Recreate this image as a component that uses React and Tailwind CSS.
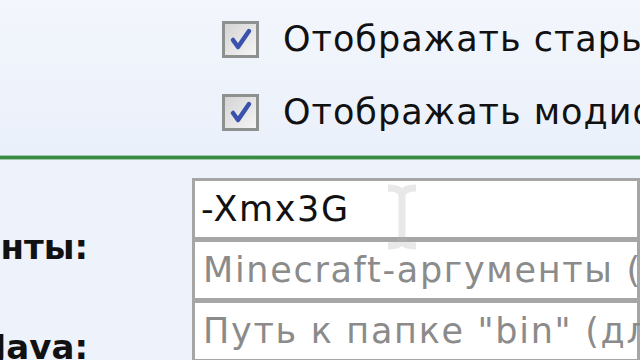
import { useState } from 'react'

const font = { fontFamily: '"DejaVu Sans", Verdana, sans-serif' }

const CheckRow = ({ label }) => (
  <div className="flex items-center gap-[24px] h-[40px]">
    <div className="w-[37px] h-[37px] shrink-0 border-[3px] border-[#8f9090] bg-gradient-to-br from-[#d4d4d4] to-[#f5f5f5] flex items-center justify-center">
      <svg width="26" height="26" viewBox="0 0 26 26">
        <path d="M5 14 L10 21 L21 5" fill="none" stroke="#3a52ae" strokeWidth="4.5" strokeLinecap="round" strokeLinejoin="round" />
      </svg>
    </div>
    <span className="text-[35px] text-[#111] whitespace-nowrap leading-none tracking-[1px]">{label}</span>
  </div>
)

const Field = ({ value, placeholder }) => (
  <div className="h-[62px] border-[3px] border-[#a6a6a6] bg-white flex items-center pl-[6px] -mt-[1px] first:mt-0">
    {value ? (
      <span className="text-[35px] text-[#111] whitespace-nowrap tracking-[1.6px]">{value}</span>
    ) : (
      <span className="text-[35px] text-[#8b8b8b] whitespace-nowrap tracking-[1.7px] pl-[2px]">{placeholder}</span>
    )}
  </div>
)

export default function App() {
  const [showOld] = useState(true)
  return (
    <div className="w-[640px] h-[360px] overflow-hidden bg-[#edf2fb]" style={font}>
      {/* Checkboxes */}
      <div className="h-[155px] pl-[222px] pt-[19px] flex flex-col gap-[33px] bg-gradient-to-b from-[#f3f6fc] to-[#eaf0fa]">
        <CheckRow label="Отображать старые версии" checked={showOld} />
        <CheckRow label="Отображать модифицированные версии" />
      </div>

      {/* Divider */}
      <div className="h-[5px] bg-[#3a8a45] border-y border-[#9fcca8]" />

      {/* Arguments */}
      <div className="relative flex pt-[18px]">
        <div className="w-[192px] shrink-0 flex flex-col items-end pr-[104px] font-bold text-[34px] text-[#111] leading-none">
          <span className="whitespace-nowrap mt-[52px]">Аргументы:</span>
          <span className="whitespace-nowrap mt-[66px]">Путь к Java:</span>
        </div>
        <div className="flex-1 min-w-0 flex flex-col">
          <Field value="-Xmx3G" />
          <Field placeholder="Minecraft-аргументы (по умолчанию)" />
          <Field placeholder='Путь к папке "bin" (для ручного выбора)' />
        </div>
        {/* I-beam cursor ghost */}
        <svg className="absolute left-[382px] top-[24px] opacity-30" width="40" height="66" viewBox="0 0 40 66">
          <path d="M6 4 Q20 4 20 12 Q20 4 34 4 M20 12 V54 Q20 62 6 62 M20 54 Q20 62 34 62" fill="none" stroke="#b5b5b5" strokeWidth="7" />
        </svg>
      </div>
    </div>
  )
}
